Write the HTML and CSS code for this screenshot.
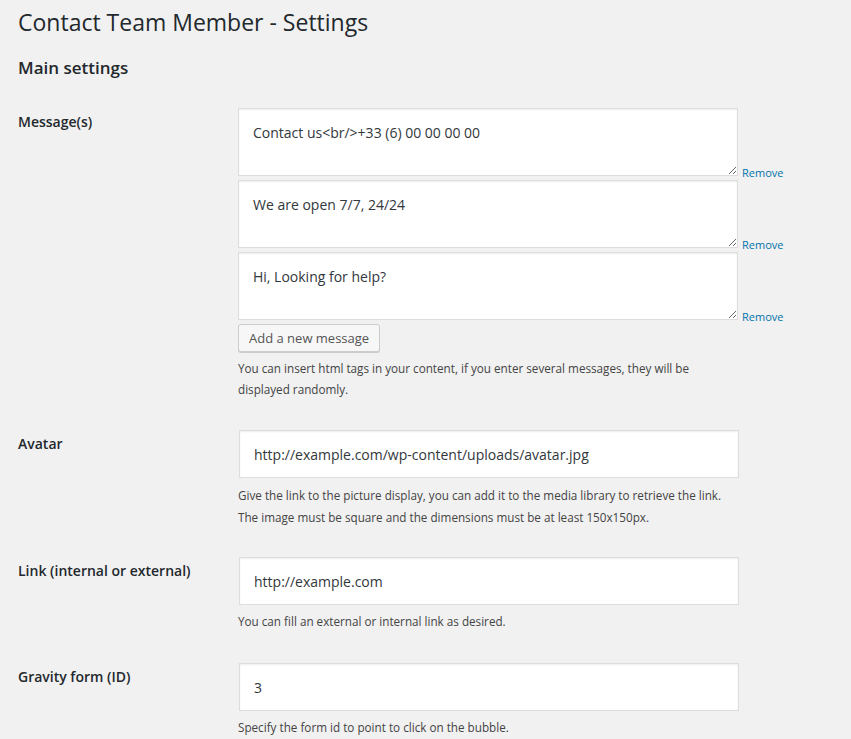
FILE: index.html
```html
<!DOCTYPE html>
<html>
<head>
<meta charset="utf-8">
<link rel="stylesheet" href="styles.css">
</head>
<body>
<div class="wrap">
  <h1 class="page-title">Contact Team Member - Settings</h1>
  <h2 class="section-title">Main settings</h2>
  <div class="form-table">
    <div class="row">
      <div class="th">Message(s)</div>
      <div class="td">
        <div class="msg">
          <textarea class="ta">Contact us&lt;br/&gt;+33 (6) 00 00 00 00</textarea>
          <a class="remove" href="#">Remove</a>
        </div>
        <div class="msg">
          <textarea class="ta">We are open 7/7, 24/24</textarea>
          <a class="remove" href="#">Remove</a>
        </div>
        <div class="msg">
          <textarea class="ta">Hi, Looking for help?</textarea>
          <a class="remove" href="#">Remove</a>
        </div>
        <button class="button" type="button">Add a new message</button>
        <p class="description">You can insert html tags in your content, if you enter several messages, they will be displayed randomly.</p>
      </div>
    </div>
    <div class="row">
      <div class="th">Avatar</div>
      <div class="td">
        <input class="text" type="text" value="http://example.com/wp-content/uploads/avatar.jpg">
        <p class="description long">Give the link to the picture display, you can add it to the media library to retrieve the link.<br>The image must be square and the dimensions must be at least 150x150px.</p>
      </div>
    </div>
    <div class="row">
      <div class="th">Link (internal or external)</div>
      <div class="td">
        <input class="text" type="text" value="http://example.com">
        <p class="description spaced">You can fill an external or internal link as desired.</p>
      </div>
    </div>
    <div class="row">
      <div class="th">Gravity form (ID)</div>
      <div class="td">
        <input class="text" type="text" value="3">
        <p class="description">Specify the form id to point to click on the bubble.</p>
      </div>
    </div>
  </div>
</div>
</body>
</html>
```
FILE: styles.css
```css
html, body {
  margin: 0;
  padding: 0;
  background: #f1f1f1;
}
body {
  font-family: "Open Sans", "Noto Sans", sans-serif;
  color: #23282d;
  font-size: 13px;
}
.wrap {
  padding: 0 0 0 18px;
}
.page-title {
  font-size: 23px;
  font-weight: 400;
  margin: 0;
  padding: 8px 0 4px;
  line-height: 29px;
}
.section-title {
  font-size: 17px;
  font-weight: 600;
  margin: 16px 0 0;
  line-height: 22px;
}
.form-table {
  display: flex;
  flex-direction: column;
  margin-top: 14px;
}
.row {
  display: flex;
}
.th {
  width: 200px;
  padding: 20px 10px 20px 0;
  font-size: 14px;
  font-weight: 600;
  line-height: 18px;
  color: #23282d;
  flex-shrink: 0;
}
.td {
  padding: 15px 10px;
  display: flex;
  flex-direction: column;
  align-items: flex-start;
}
.msg {
  display: flex;
  align-items: flex-end;
  gap: 4px;
  margin-bottom: 4px;
}
.ta {
  width: 500px;
  height: 68px;
  box-sizing: border-box;
  border: 1px solid #ddd;
  box-shadow: inset 0 1px 2px rgba(0,0,0,.07);
  background: #fff;
  padding: 14px 14px;
  font-family: "Open Sans", "Noto Sans", sans-serif;
  font-size: 14px;
  line-height: 20px;
  color: #32373c;
  margin: 0;
  display: block;
}
.remove {
  font-size: 11px;
  line-height: 11px;
  color: #0073aa;
  text-decoration: none;
  margin-bottom: -2px;
}
.button {
  height: 28px;
  margin: 0;
  padding: 0 10px 1px;
  font-family: "Open Sans", "Noto Sans", sans-serif;
  font-size: 13px;
  line-height: 26px;
  color: #555;
  background: #f7f7f7;
  border: 1px solid #ccc;
  border-radius: 3px;
  box-shadow: 0 1px 0 #ccc;
  box-sizing: border-box;
}
.description {
  margin: 6px 0 0;
  font-size: 11.7px;
  line-height: 21px;
  color: #444;
  max-width: 500px;
}
.description.long {
  line-height: 22px;
  margin-bottom: -1px;
}
.description.spaced {
  margin-bottom: 1px;
}
.text {
  width: 500px;
  height: 48px;
  box-sizing: border-box;
  border: 1px solid #ddd;
  box-shadow: inset 0 1px 2px rgba(0,0,0,.07);
  background: #fff;
  padding: 0 14px;
  margin: 0 0 0 1px;
  font-family: "Open Sans", "Noto Sans", sans-serif;
  font-size: 14px;
  color: #32373c;
}
```
